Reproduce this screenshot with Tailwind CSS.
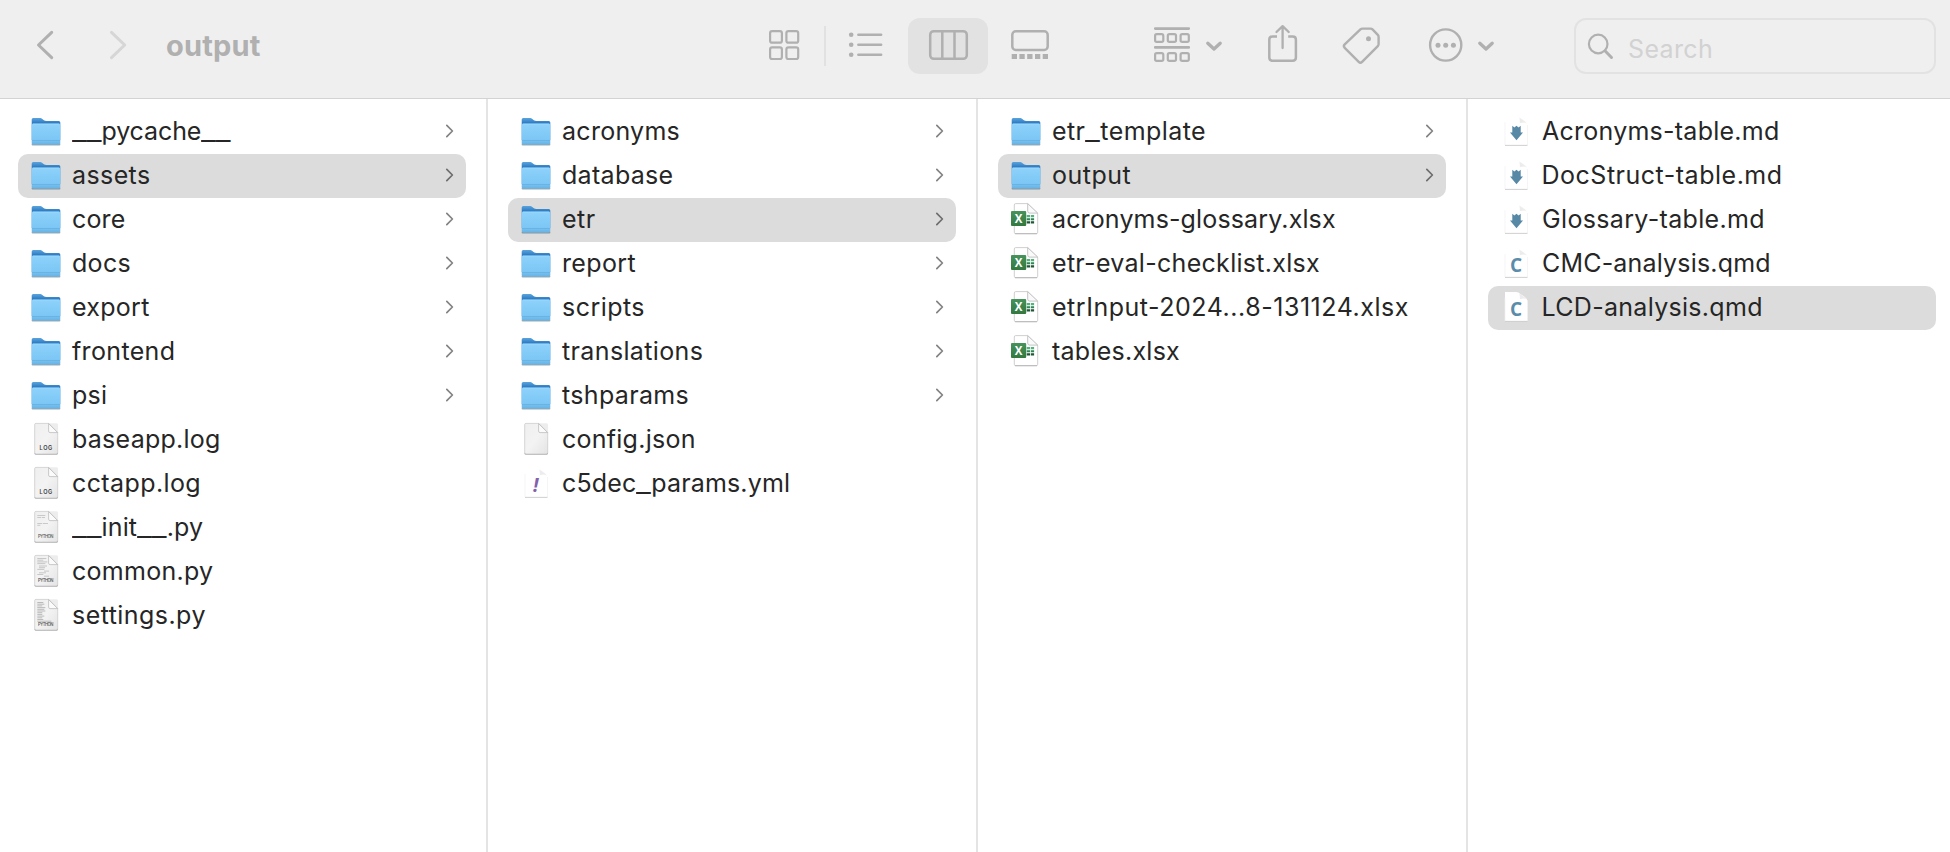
<!DOCTYPE html>
<html lang="en">
<head>
<meta charset="utf-8">
<title>output</title>
<script src="https://cdn.jsdelivr.net/npm/@tailwindcss/browser@4"></script>
</head>
<body class="h-screen overflow-hidden bg-white font-[Inter,sans-serif] text-[#262626]">
<svg class="absolute size-0">
  <defs>
    <linearGradient id="gBack" x1="0" y1="0" x2="0" y2="1"><stop offset="0" stop-color="#5ba5dc"/><stop offset=".22" stop-color="#2f7cc4"/><stop offset="1" stop-color="#3b8bd0"/></linearGradient>
    <linearGradient id="gFront" x1="0" y1="0" x2="0" y2="1"><stop offset="0" stop-color="#8dd2fb"/><stop offset=".76" stop-color="#7cc6f5"/><stop offset=".78" stop-color="#62afdf"/><stop offset=".84" stop-color="#74bdec"/><stop offset="1" stop-color="#64b2e4"/></linearGradient>
    <linearGradient id="gDoc" x1="0" y1="0" x2="1" y2="1"><stop offset="0" stop-color="#efefef"/><stop offset=".5" stop-color="#f3f3f3"/><stop offset="1" stop-color="#e4e4e4"/></linearGradient>
    <linearGradient id="gGreen" x1="0" y1="0" x2="0" y2="1"><stop offset="0" stop-color="#47935c"/><stop offset="1" stop-color="#33783f"/></linearGradient>
    <linearGradient id="gFold" x1="0" y1="1" x2="1" y2="0"><stop offset="0" stop-color="#cfcfcf"/><stop offset=".5" stop-color="#f6f6f6"/><stop offset="1" stop-color="#ffffff"/></linearGradient>
  </defs>
  <symbol id="folder" viewBox="0 0 36 44">
    <rect x="3.6" y="33.4" width="28.8" height="2" rx="1" fill="#000" opacity=".35"/>
    <path d="M3.7 9.5Q3.7 8 5.2 8h6.3c1.5 0 2.2.4 3.2 1.3 1.2 1.1 2 1.7 3.6 1.7h12.500q1.500 0 1.500 1.500V30H3.700z" fill="url(#gBack)"/>
    <path d="M3.7 15.300q0-1.500 1.500-1.500h25.600q1.500 0 1.500 1.500v18q0 1.400-1.400 1.400H5.100q-1.400 0-1.400-1.400z" fill="url(#gFront)"/>
    <path d="M4.5 14h27" stroke="#a5ddfd" stroke-width=".8"/>
  </symbol>
  <symbol id="doc" viewBox="0 0 36 44">
    <rect x="6.3" y="5.2" width="23.8" height="31.6" rx="1.5" fill="#000" opacity=".07"/>
    <rect x="6.600" y="34.500" width="23.200" height="2" rx="1" fill="#000" opacity=".4"/>
    <path d="M6.700 6.700q0-1.300 1.300-1.300h12.800l8.900 9V34.600q0 1.300-1.300 1.300H8q-1.300 0-1.300-1.300z" fill="url(#gDoc)" stroke="#c4c4c4" stroke-width=".6"/>
    <path d="M20.600 5.600l9 9h-7.500q-1.500 0-1.500-1.500z" fill="#fbfbfb" stroke="#b5b5b5" stroke-width=".7"/>
  </symbol>
  <symbol id="py" viewBox="0 0 36 44">
    <use href="#doc"/>
    <path d="M9.300 9.500h8M9.300 11.500h4M14 11.500h3M9.300 17.500h5M15 17.500h5M9.300 19.300h3" stroke="#b8b8b8" stroke-width=".7"/>
  </symbol>
  <symbol id="pyMany" viewBox="0 0 36 44">
    <use href="#doc"/>
    <path d="M9.300 8.500h9M9.300 10.200h6M9.300 11.900h10M9.300 13.600h8M11 16h8M11 17.700h6M9.300 19.400h7M16 21.100h5M11 22.800h7M9.300 24.500h6M16 26.200h5" stroke="#b4b4b4" stroke-width=".7"/>
  </symbol>
  <symbol id="pyFull" viewBox="0 0 36 44">
    <use href="#doc"/>
    <path d="M9.300 8.500h6M9.300 10.200h7M9.300 11.900h5M9.300 13.600h8M9.300 15.300h7M9.300 17h8M9.300 18.700h5M9.300 20.400h5M9.300 22.100h7M9.300 23.800h5M9.300 25.500h6M9.300 27.200h14" stroke="#acacac" stroke-width=".8"/>
  </symbol>
  <symbol id="xlsx" viewBox="0 0 36 44">
    <path d="M6.300 7q0-1.400 1.400-1.400h12l10 9.700V34.300q0 1.400-1.400 1.400H7.700q-1.400 0-1.400-1.400z" fill="#fff" stroke="#c9c9c9" stroke-width=".9"/>
    <path d="M7 35.700h22" stroke="#b4b4b4" stroke-width=".9"/>
    <path d="M19.700 5.600v7.500q0 2 2 2h8z" fill="#fafafa" stroke="#bdbdbd" stroke-width=".9"/>
    <path d="M18.700 17h3.300v2.300h-3.300zM22.800 17h3.300v2.300h-3.300z" fill="#52b47a"/>
    <path d="M18.700 20.200h3.300v2h-3.300zM22.800 20.200h3.300v2h-3.300z" fill="#2f8554"/>
    <path d="M18.700 23.200h3.300v2.300h-3.300zM22.800 23.200h3.300v2.300h-3.300z" fill="#205537"/>
    <rect x="3" y="13" width="15.200" height="15" rx="1" fill="url(#gGreen)"/>
  </symbol>
  <symbol id="page" viewBox="0 0 36 44">
    <path d="M7 6h11.500q2.500.5 4 2.300 1.200 2.200 3 2.700 3 .6 4 3.500V35.300H7z" fill="#fff"/>
    <path d="M18.500 6q2.500.5 4 2.300 1 2.500 2 3.700 2.500-.4 5 2.500Q27 9.500 18.500 6z" fill="url(#gFold)"/>
    <path d="M21.300 7.500q.8 3.500.5 5.800 3.200-1.200 6.700-.5" fill="#ececec"/>
    <path d="M7 12v23M29.500 15v20" stroke="#f1f1f1" stroke-width=".7"/>
    <path d="M7 35.400h22.500" stroke="#cbcbcb" stroke-width=".9"/>
  </symbol>
  <symbol id="md" viewBox="0 0 36 44">
    <use href="#page"/>
    <path d="M14.300 15.700l2.100 1.900 2.100-1.900 2.100 1.900 2.100-1.900v6.700h2.300L18.500 30.200 12 22.400h2.300z" fill="#5788a6"/>
  </symbol>
  <symbol id="chev" viewBox="0 0 10 14">
    <path d="M1.800 1.400l5.600 5.600-5.600 5.600" fill="none" stroke="currentColor" stroke-width="1.700" stroke-linecap="round" stroke-linejoin="round"/>
  </symbol>
</svg>

<div class="flex h-full flex-col">
  <header class="flex h-[98px] shrink-0 items-start bg-[#efefef] pt-[18px] pl-[30px] text-[#b0b0b0]">
    <svg class="h-14 w-[30px] shrink-0" viewBox="30 18 30 56" fill="none" stroke="currentColor" stroke-width="3" stroke-linecap="round" stroke-linejoin="round"><path d="M51.700 32.300L38.500 45l13.200 12.700"/></svg>
    <svg class="ml-[43px] h-14 w-[30px] shrink-0 text-[#d6d6d6]" viewBox="103 18 30 56" fill="none" stroke="currentColor" stroke-width="3" stroke-linecap="round" stroke-linejoin="round"><path d="M111.500 32.300L124.700 45l-13.200 12.700"/></svg>
    <h1 class="ml-[33px] w-[600px] shrink-0 text-[29px] leading-[55px] font-bold tracking-[0.2px]">output</h1>
    <svg class="h-14 w-[38px] shrink-0" viewBox="766 18 38 56" fill="none" stroke="currentColor" stroke-width="2.200"><rect x="770.100" y="31.100" width="11.800" height="11.600" rx="2"/><rect x="786.400" y="31.100" width="11.800" height="11.600" rx="2"/><rect x="770.100" y="47.400" width="11.800" height="11.600" rx="2"/><rect x="786.400" y="47.400" width="11.800" height="11.600" rx="2"/></svg>
    <div class="mt-2 ml-5 h-10 w-0.5 shrink-0 bg-[#e1e1e1]"></div>
    <svg class="ml-5 h-14 w-10 shrink-0" viewBox="846 18 40 56" fill="currentColor"><circle cx="851.200" cy="34.800" r="2.300"/><circle cx="851.200" cy="44.800" r="2.300"/><circle cx="851.200" cy="54.800" r="2.300"/><path d="M858.400 34.800h22.700M858.400 44.800h22.700M858.400 54.800h22.700" stroke="currentColor" stroke-width="2.600" stroke-linecap="round"/></svg>
    <div class="ml-[22px] h-14 w-20 shrink-0 rounded-xl bg-[#e2e2e2]">
      <svg class="h-14 w-20" viewBox="908 18 80 56" fill="none" stroke="currentColor" stroke-width="2.500"><rect x="930.200" y="31.200" width="36.600" height="27.600" rx="3.500"/><path d="M942.300 31v28M954.500 31v28"/></svg>
    </div>
    <svg class="ml-5 h-14 w-11 shrink-0" viewBox="1008 18 44 56" fill="none" stroke="currentColor" stroke-width="2.500"><rect x="1012.300" y="31.300" width="35.400" height="18.600" rx="3.500"/><path fill="currentColor" stroke="none" d="M1011.700 54h5.300v5h-5.300zM1019.400 54h5.300v5h-5.300zM1027.200 54h5.300v5h-5.300zM1035 54h5.300v5h-5.300zM1042.700 54h5.300v5h-5.300z"/></svg>
    <svg class="ml-[98px] h-14 w-[76px] shrink-0" viewBox="1150 18 76 56" fill="none" stroke="currentColor" stroke-width="2.200"><path d="M1155.200 28.600h33.600M1155.200 47.400h33.600" stroke-width="2.600" stroke-linecap="round"/><g><rect x="1155.100" y="34.100" width="8.200" height="7.800" rx="1.600"/><rect x="1167.800" y="34.100" width="8.200" height="7.800" rx="1.600"/><rect x="1180.600" y="34.100" width="8.200" height="7.800" rx="1.600"/><rect x="1155.100" y="53.100" width="8.200" height="7.800" rx="1.600"/><rect x="1167.800" y="53.100" width="8.200" height="7.800" rx="1.600"/><rect x="1180.600" y="53.100" width="8.200" height="7.800" rx="1.600"/></g><path d="M1207.800 43.200l6.200 5.800 6.200-5.800" stroke-width="3.300" stroke-linecap="round" stroke-linejoin="round"/></svg>
    <svg class="ml-[38px] h-14 w-[38px] shrink-0" viewBox="1264 18 38 56" fill="none" stroke="currentColor" stroke-width="2.500" stroke-linecap="round" stroke-linejoin="round"><path d="M1277 36.500h-4.500q-3.200 0-3.200 3.200v17.800q0 3.200 3.200 3.200h20.200q3.200 0 3.200-3.200V39.700q0-3.200-3.200-3.200h-4.500" stroke-linecap="butt"/><path d="M1282.600 48V26.300M1276.500 32l6.100-5.900 6.100 5.900" stroke-width="2.300"/></svg>
    <svg class="ml-[37px] h-14 w-11 shrink-0" viewBox="1339 18 44 56" fill="none" stroke="currentColor" stroke-width="2.400" stroke-linejoin="round"><path d="M1362.500 28.600h8q1.200 0 2 .8l5.300 5.500q.8.800.8 2v7.200q0 1.200-.8 2l-15.700 15.700q-1.700 1.700-3.400 0l-14-14q-1.700-1.700 0-3.400l15.700-15q.9-.8 2.100-.8z"/><circle cx="1368.500" cy="38.700" r="2.500" fill="currentColor" stroke="none"/></svg>
    <svg class="ml-[43px] h-14 w-[74px] shrink-0" viewBox="1426 18 74 56" fill="none" stroke="currentColor" stroke-width="2.400"><circle cx="1445.700" cy="45" r="15.600"/><g fill="currentColor" stroke="none"><circle cx="1438" cy="45.200" r="2.500"/><circle cx="1445.700" cy="45.200" r="2.500"/><circle cx="1453.400" cy="45.200" r="2.500"/></g><path d="M1479.800 43.200l6.200 5.800 6.200-5.800" stroke-width="3.300" stroke-linecap="round" stroke-linejoin="round"/></svg>
    <div class="ml-[74px] flex h-14 w-[362px] shrink-0 items-start rounded-xl border-2 border-[#e2e2e2]">
      <svg class="ml-2.5 h-[52px] w-[30px] shrink-0" viewBox="1586 20 30 52" fill="none" stroke="currentColor" stroke-linecap="round"><circle cx="1598.200" cy="44" r="9.300" stroke-width="2.200"/><path d="M1605.200 51l6.300 6.500" stroke-width="3"/></svg>
      <span class="ml-3 text-[25px] leading-[59px] tracking-[0.36px] text-[#d2d2d2]">Search</span>
    </div>
  </header>

  <main class="flex min-h-0 flex-1 border-t border-[#d3d3d3] text-[25px] leading-[42px] [&_a]:flex [&_a]:h-11 [&_a]:w-[448px] [&_a]:items-center [&_a]:rounded-[10px] [&_a]:pr-[11px] [&_a]:pl-2.5 [&_a]:whitespace-pre [&_i]:inline-block [&_i]:origin-left [&_i]:scale-x-[1.3] [&_i]:not-italic [&_span]:pb-0.5">
    <nav class="w-[488px] shrink-0 border-r-2 border-[#e4e4e4] pt-[11px] pl-[18px]">
      <a><svg class="mr-2 h-11 w-9"><use href="#folder"/></svg><span class="tracking-[-0.1px]"><i class="mr-[6.6px] tracking-normal">__</i>pycache<i class="tracking-normal">__</i></span><svg class="mb-0.5 ml-auto h-3.5 w-2.5 text-[#838383]"><use href="#chev"/></svg></a>
      <a class="bg-[#dcdcdc]"><svg class="mr-2 h-11 w-9"><use href="#folder"/></svg><span class="tracking-[0.4px]">assets</span><svg class="mb-0.5 ml-auto h-3.5 w-2.5 text-[#6e6e6e]"><use href="#chev"/></svg></a>
      <a><svg class="mr-2 h-11 w-9"><use href="#folder"/></svg><span class="tracking-[0.14px]">core</span><svg class="mb-0.5 ml-auto h-3.5 w-2.5 text-[#838383]"><use href="#chev"/></svg></a>
      <a><svg class="mr-2 h-11 w-9"><use href="#folder"/></svg><span class="tracking-[0.3px]">docs</span><svg class="mb-0.5 ml-auto h-3.5 w-2.5 text-[#838383]"><use href="#chev"/></svg></a>
      <a><svg class="mr-2 h-11 w-9"><use href="#folder"/></svg><span class="tracking-[0.29px]">export</span><svg class="mb-0.5 ml-auto h-3.5 w-2.5 text-[#838383]"><use href="#chev"/></svg></a>
      <a><svg class="mr-2 h-11 w-9"><use href="#folder"/></svg><span class="tracking-[0.35px]">frontend</span><svg class="mb-0.5 ml-auto h-3.5 w-2.5 text-[#838383]"><use href="#chev"/></svg></a>
      <a><svg class="mr-2 h-11 w-9"><use href="#folder"/></svg><span class="tracking-[0.3px]">psi</span><svg class="mb-0.5 ml-auto h-3.5 w-2.5 text-[#838383]"><use href="#chev"/></svg></a>
      <a><svg class="mr-2 h-11 w-9 font-semibold" fill="#3c3c3c"><use href="#doc"/><text x="11.600" y="31.600" textLength="12.600" font-size="5.600">LOG</text></svg><span class="tracking-[0.26px]">baseapp.log</span></a>
      <a><svg class="mr-2 h-11 w-9 font-semibold" fill="#3c3c3c"><use href="#doc"/><text x="11.600" y="31.600" textLength="12.600" font-size="5.600">LOG</text></svg><span class="tracking-[0.4px]">cctapp.log</span></a>
      <a><svg class="mr-2 h-11 w-9 font-medium" fill="#555"><use href="#py"/><text x="10" y="31.600" textLength="15.400" font-size="4.200">PYTHON</text></svg><span class="tracking-[0.1px]"><i class="mr-[6.8px] tracking-normal">__</i>init<i class="mr-[6.8px] tracking-normal">__</i>.py</span></a>
      <a><svg class="mr-2 h-11 w-9 font-medium" fill="#4a4a4a"><use href="#pyMany"/><text x="10" y="31.600" textLength="15.400" font-size="4.200">PYTHON</text></svg><span class="tracking-[0.28px]">common.py</span></a>
      <a><svg class="mr-2 h-11 w-9 font-medium" fill="#4a4a4a"><use href="#pyFull"/><text x="10" y="31.600" textLength="15.400" font-size="4.200">PYTHON</text></svg><span class="tracking-[0.45px]">settings.py</span></a>
    </nav>
    <nav class="w-[490px] shrink-0 border-r-2 border-[#e4e4e4] pt-[11px] pl-5">
      <a><svg class="mr-2 h-11 w-9"><use href="#folder"/></svg><span class="tracking-[0.28px]">acronyms</span><svg class="mb-0.5 ml-auto h-3.5 w-2.5 text-[#838383]"><use href="#chev"/></svg></a>
      <a><svg class="mr-2 h-11 w-9"><use href="#folder"/></svg><span class="tracking-[0.3px]">database</span><svg class="mb-0.5 ml-auto h-3.5 w-2.5 text-[#838383]"><use href="#chev"/></svg></a>
      <a class="bg-[#dcdcdc]"><svg class="mr-2 h-11 w-9"><use href="#folder"/></svg><span class="tracking-[0.5px]">etr</span><svg class="mb-0.5 ml-auto h-3.5 w-2.5 text-[#6e6e6e]"><use href="#chev"/></svg></a>
      <a><svg class="mr-2 h-11 w-9"><use href="#folder"/></svg><span class="tracking-[0.37px]">report</span><svg class="mb-0.5 ml-auto h-3.5 w-2.5 text-[#838383]"><use href="#chev"/></svg></a>
      <a><svg class="mr-2 h-11 w-9"><use href="#folder"/></svg><span class="tracking-[0.45px]">scripts</span><svg class="mb-0.5 ml-auto h-3.5 w-2.5 text-[#838383]"><use href="#chev"/></svg></a>
      <a><svg class="mr-2 h-11 w-9"><use href="#folder"/></svg><span class="tracking-[0.37px]">translations</span><svg class="mb-0.5 ml-auto h-3.5 w-2.5 text-[#838383]"><use href="#chev"/></svg></a>
      <a><svg class="mr-2 h-11 w-9"><use href="#folder"/></svg><span class="tracking-[0.34px]">tshparams</span><svg class="mb-0.5 ml-auto h-3.5 w-2.5 text-[#838383]"><use href="#chev"/></svg></a>
      <a><svg class="mr-2 h-11 w-9"><use href="#doc"/></svg><span class="tracking-[0.25px]">config.json</span></a>
      <a><svg class="mr-2 h-11 w-9"><use href="#yml"/><use href="#page"/><text x="17.600" y="29.600" text-anchor="middle" font-family="Open Sans" font-weight="700" font-style="italic" font-size="19" fill="#8460ab">!</text></svg><span class="tracking-[0.15px]">c5dec<i class="mr-[3.5px] tracking-normal">_</i>params.yml</span></a>
    </nav>
    <nav class="w-[490px] shrink-0 border-r-2 border-[#e4e4e4] pt-[11px] pl-5">
      <a><svg class="mr-2 h-11 w-9"><use href="#folder"/></svg><span class="tracking-[0.42px]">etr<i class="mr-[3.5px] tracking-normal">_</i>template</span><svg class="mb-0.5 ml-auto h-3.5 w-2.5 text-[#838383]"><use href="#chev"/></svg></a>
      <a class="bg-[#dcdcdc]"><svg class="mr-2 h-11 w-9"><use href="#folder"/></svg><span class="tracking-[0.5px]">output</span><svg class="mb-0.5 ml-auto h-3.5 w-2.5 text-[#6e6e6e]"><use href="#chev"/></svg></a>
      <a><svg class="mr-2 h-11 w-9 font-['Open_Sans'] font-bold" fill="#fff"><use href="#xlsx"/><text x="10.500" y="24.600" text-anchor="middle" font-size="11.500">X</text></svg><span class="tracking-[0.14px]">acronyms-glossary.xlsx</span></a>
      <a><svg class="mr-2 h-11 w-9 font-['Open_Sans'] font-bold" fill="#fff"><use href="#xlsx"/><text x="10.500" y="24.600" text-anchor="middle" font-size="11.500">X</text></svg><span class="tracking-[0.3px]">etr-eval-checklist.xlsx</span></a>
      <a><svg class="mr-2 h-11 w-9 font-['Open_Sans'] font-bold" fill="#fff"><use href="#xlsx"/><text x="10.500" y="24.600" text-anchor="middle" font-size="11.500">X</text></svg><span class="tracking-[0.53px]">etrInput-2024...8-131124.xlsx</span></a>
      <a><svg class="mr-2 h-11 w-9 font-['Open_Sans'] font-bold" fill="#fff"><use href="#xlsx"/><text x="10.500" y="24.600" text-anchor="middle" font-size="11.500">X</text></svg><span class="tracking-[0.25px]">tables.xlsx</span></a>
    </nav>
    <nav class="flex-1 pt-[11px] pl-5">
      <a><svg class="mr-2 h-11 w-9"><use href="#md"/></svg><span class="tracking-[0.25px]">Acronyms-table.md</span></a>
      <a><svg class="mr-[7.5px] h-11 w-9"><use href="#md"/></svg><span class="tracking-[0.51px]">DocStruct-table.md</span></a>
      <a><svg class="mr-2 h-11 w-9"><use href="#md"/></svg><span class="tracking-[0.34px]">Glossary-table.md</span></a>
      <a><svg class="mr-2 h-11 w-9 font-['Open_Sans'] font-bold" fill="#5b8ca9"><use href="#page"/><text x="18" y="29.600" text-anchor="middle" font-size="19">C</text></svg><span class="tracking-[0.18px]">CMC-analysis.qmd</span></a>
      <a class="bg-[#dcdcdc]"><svg class="mr-[7.5px] h-11 w-9 font-['Open_Sans'] font-bold" fill="#5b8ca9"><use href="#page"/><text x="18" y="29.600" text-anchor="middle" font-size="19">C</text></svg><span class="tracking-[0.3px]">LCD-analysis.qmd</span></a>
    </nav>
  </main>
</div>
</body>
</html>
